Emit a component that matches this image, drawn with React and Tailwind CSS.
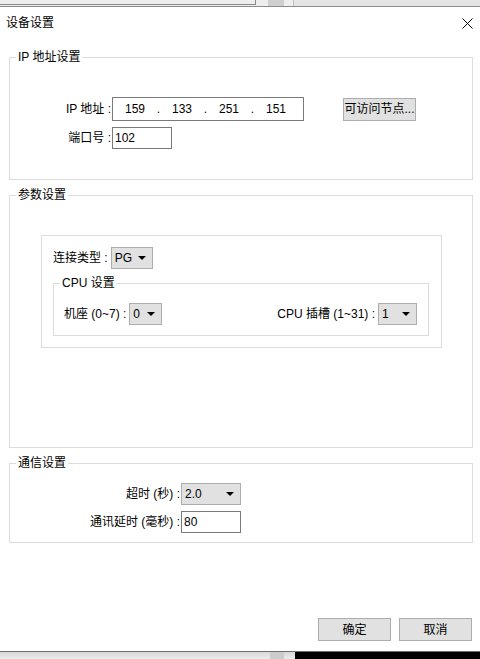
const font = { fontFamily: '"Liberation Sans", "Noto Sans CJK SC", sans-serif' };

function Combo({ value, className }) {
  return (
    <div className={`flex items-center justify-between h-[22px] bg-[#e1e1e1] border border-[#adadad] pl-[3px] pr-[6px] ${className}`}>
      <span>{value}</span>
      <svg width="8" height="4" viewBox="0 0 8 4">
        <path d="M0 0 H8 L4 4 Z" fill="#000" />
      </svg>
    </div>
  );
}

function Box({ title, className, children }) {
  return (
    <fieldset className={`border border-[#dcdcdc] ${className}`}>
      <legend className="ml-[6px] px-[2px] leading-[16px]">{title}</legend>
      {children}
    </fieldset>
  );
}

export default function App() {
  return (
    <div className="w-[480px] h-[659px] flex flex-col text-[12px] text-black overflow-hidden" style={font}>
      {/* window behind, top edge */}
      <div className="h-[7px] flex bg-[#eeeeee] border-b border-[#8c8c8c]">
        <div className="w-[256px] h-[5px] border-r border-b border-[#8a8a8a]" />
        <div className="w-[12px]" />
        <div className="w-[16px] bg-[#cfcfcf]" />
        <div className="w-[10px] border-r border-[#c0c0c0]" />
        <div className="flex-1 bg-[#e4e4e4]" />
      </div>

      <div className="flex-1 bg-white flex flex-col">
        <div className="h-[30px] flex items-center justify-between pl-[6px] pr-[7px] pt-[2px]">
          <span className="leading-[16px]">设备设置</span>
          <svg width="11" height="11" viewBox="0 0 11 11">
            <path d="M0.5 0.5 L10.5 10.5 M10.5 0.5 L0.5 10.5" stroke="#000" strokeWidth="1" fill="none" />
          </svg>
        </div>

        <Box title="IP 地址设置" className="ml-[9px] w-[464px] mt-[12px] h-[131px]">
          <div className="mt-[32px] flex items-center">
            <div className="w-[101px] text-right">IP 地址 :</div>
            <div className="ml-[1px] w-[192px] h-[24px] border border-[#7a7a7a] flex items-center pl-[4px]">
              <span className="w-[36px] text-center">159</span>
              <span className="w-[11px] text-center">.</span>
              <span className="w-[36px] text-center">133</span>
              <span className="w-[11px] text-center">.</span>
              <span className="w-[36px] text-center">251</span>
              <span className="w-[11px] text-center">.</span>
              <span className="w-[36px] text-center">151</span>
            </div>
            <button className="ml-[39px] w-[73px] h-[23px] bg-[#e1e1e1] border border-[#adadad]">可访问节点...</button>
          </div>
          <div className="mt-[6px] flex items-center">
            <div className="w-[101px] text-right">端口号 :</div>
            <div className="ml-[1px] w-[60px] h-[22px] border border-[#7a7a7a] flex items-center pl-[2px]">102</div>
          </div>
        </Box>

        <Box title="参数设置" className="ml-[9px] w-[464px] mt-[7px] h-[261px]">
          <div className="ml-[31px] mt-[32px] w-[401px] h-[113px] border border-[#dcdcdc] pt-[11px] pl-[11px]">
            <div className="flex items-center">
              <span>连接类型 :</span>
              <Combo value="PG" className="ml-[3px] w-[42px]" />
            </div>
            <Box title="CPU 设置" className="mt-[6px] w-[376px] h-[61px]">
              <div className="mt-[12px] flex items-center pl-[10px] pr-[11px]">
                <span>机座 (0~7) :</span>
                <Combo value="0" className="ml-[3px] w-[33px]" />
                <span className="ml-auto">CPU 插槽 (1~31) :</span>
                <Combo value="1" className="ml-[3px] w-[39px]" />
              </div>
            </Box>
          </div>
        </Box>

        <Box title="通信设置" className="ml-[9px] w-[464px] mt-[7px] h-[88px]">
          <div className="mt-[12px] flex items-center">
            <div className="w-[170px] text-right">超时 (秒) :</div>
            <Combo value="2.0" className="ml-[1px] w-[60px]" />
          </div>
          <div className="mt-[6px] flex items-center">
            <div className="w-[170px] text-right">通讯延时 (毫秒) :</div>
            <div className="ml-[1px] w-[60px] h-[22px] border border-[#7a7a7a] flex items-center pl-[2px]">80</div>
          </div>
        </Box>

        <div className="mt-auto mb-[10px] flex justify-end gap-[8px] pr-[8px]">
          <button className="w-[73px] h-[23px] bg-[#e1e1e1] border border-[#adadad]">确定</button>
          <button className="w-[73px] h-[23px] bg-[#e1e1e1] border border-[#adadad]">取消</button>
        </div>
      </div>

      {/* strip of the window below */}
      <div className="h-[8px] flex border-t border-[#6e6e6e]">
        <div className="w-[295px] bg-gradient-to-b from-[#d8d8d8] to-[#ececec] flex">
          <div className="w-[270px]" />
          <div className="w-[14px] bg-[#cccccc]" />
        </div>
        <div className="flex-1 bg-black" />
      </div>
    </div>
  );
}
